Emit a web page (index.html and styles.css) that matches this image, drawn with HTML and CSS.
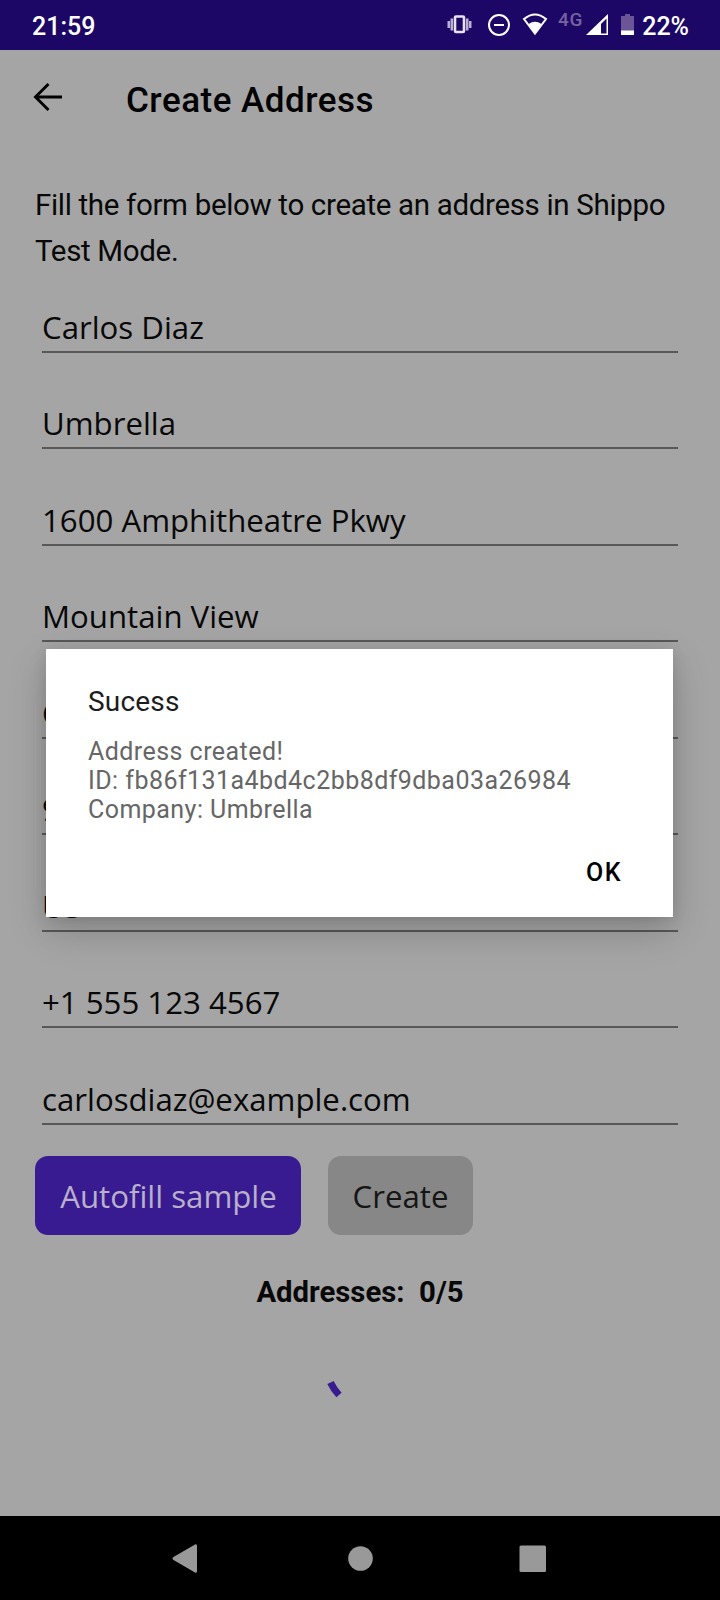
FILE: index.html
```html
<!DOCTYPE html>
<html lang="en">
<head>
<meta charset="utf-8">
<title>Create Address</title>
<link rel="stylesheet" href="styles.css">
</head>
<body>
<div class="screen">
  <header class="status">
    <span class="clock">21:59</span>
    <svg class="status-icons" width="194" height="50" viewBox="0 0 194 50" fill="none">
      <g fill="#b9b0d3"><rect x="2.500" y="21" width="2.500" height="7"/><rect x="5.500" y="18.500" width="2.500" height="12"/><rect x="21" y="18.500" width="2.500" height="12"/><rect x="24" y="21" width="2.500" height="7"/></g>
      <rect x="10" y="16.500" width="9" height="15.500" rx="1" stroke="#e6e2f0" stroke-width="2.600"/>
      <circle cx="54" cy="25" r="10" stroke="#fff" stroke-width="2"/>
      <path d="M49 25h10" stroke="#fff" stroke-width="2"/>
      <path d="M79 19Q90 10 101 19L90 33.500Z" stroke="#fff" stroke-width="2"/>
      <path d="M83.500 24Q90 19.500 96.500 24L90 33.500Z" fill="#fff"/>
      <path d="M141 35L163 14V35Z" fill="#fff"/><path d="M156 24L161.500 18.500V33.500H156Z" fill="#1d0766"/>
      <path d="M176 16h4v-2h5v2h4v19h-13Z" fill="#6a5697"/><path d="M176 30.500h13V35h-13Z" fill="#fff"/>
    </svg>
    <span class="network">4G</span>
    <span class="battery">22%</span>
  </header>
  <div class="appbar">
    <svg width="30" height="30" viewBox="0 0 30 30" fill="none" stroke="#000" stroke-width="2.900"><path d="M29 15H3M15.500 2L2.500 15L15.500 28"/></svg>
    <h1 class="title">Create Address</h1>
  </div>
  <main class="content">
    <p class="intro">Fill the form below to create an address in Shippo<br>Test Mode.</p>
    <div class="fields">
      <div class="field"><span>Carlos Diaz</span></div>
      <div class="field"><span>Umbrella</span></div>
      <div class="field"><span>1600 Amphitheatre Pkwy</span></div>
      <div class="field"><span>Mountain View</span></div>
      <div class="field"><span>CA</span></div>
      <div class="field"><span>94043</span></div>
      <div class="field"><span>US</span></div>
      <div class="field"><span>+1 555 123 4567</span></div>
      <div class="field"><span>carlosdiaz@example.com</span></div>
    </div>
    <div class="actions">
      <button class="btn primary">Autofill sample</button>
      <button class="btn secondary">Create</button>
    </div>
    <p class="count">Addresses:&nbsp; 0/5</p>
    <svg class="spinner" width="60" height="60" viewBox="0 0 60 60" fill="none"><path d="M3.500 14.500Q6.500 21 12 27" stroke="#381b91" stroke-width="7"/></svg>
  </main>
  <nav class="nav">
    <svg width="720" height="84" viewBox="0 0 720 84" fill="#999"><path d="M173.500 41L195 28.500Q197 27.500 197 30V55Q197 57.500 195 56.500L173.500 44Q171.500 42.500 173.500 41Z"/><circle cx="360.500" cy="42.500" r="12.300"/><rect x="519.500" y="29.500" width="26.500" height="26.500" rx="1.500"/></svg>
  </nav>
  <section class="dialog" role="dialog">
    <h2 class="dialog-title">Sucess</h2>
    <p class="dialog-text">Address created!<br>ID: fb86f131a4bd4c2bb8df9dba03a26984<br>Company: Umbrella</p>
    <button class="ok">OK</button>
  </section>
</div>
</body>
</html>
```
FILE: styles.css
```css
* { box-sizing: border-box; margin: 0; padding: 0; }
body { width: 720px; height: 1600px; overflow: hidden; font-family: Roboto, sans-serif; color: #080808; }
button { border: 0; font: inherit; }
.screen { position: relative; width: 720px; height: 1600px; display: flex; flex-direction: column; background: #a5a5a5; }
.status { position: relative; flex: none; height: 50px; padding: 3px 31px 0 32px; display: flex; align-items: center; justify-content: space-between; background: #1d0766; color: #fff; font-size: 25px; font-weight: 500; }
.status-icons { position: absolute; left: 445px; top: 0; }
.network { position: absolute; left: 558px; top: 9px; font-size: 19px; line-height: 22px; letter-spacing: 0.7px; color: #7462a0; }
.appbar { flex: none; height: 100px; padding-left: 33px; display: flex; align-items: center; }
.appbar svg { margin-top: -6px; }
.title { margin-left: 63px; font-size: 35px; font-weight: 500; letter-spacing: 0.5px; color: #000; }
.content { flex: 1; display: flex; flex-direction: column; padding: 32px 42px 0; }
.intro { margin-left: -7px; font-size: 29.5px; line-height: 46px; letter-spacing: -0.33px; white-space: nowrap; }
.fields { margin-top: -18px; }
.field { height: 96.500px; display: flex; align-items: flex-end; padding-bottom: 1px; border-bottom: 2px solid #585858; font-family: "Open Sans", sans-serif; font-size: 31.200px; line-height: 46px; white-space: nowrap; }
.actions { display: flex; gap: 27px; margin: 31px 0 0 -7px; }
.btn { height: 79px; padding-top: 2px; border-radius: 13px; font-family: "Open Sans", sans-serif; font-size: 31.200px; white-space: nowrap; }
.primary { width: 266px; padding-left: 1px; background: #381b91; color: #b9b0c9; }
.secondary { width: 145px; background: #878787; color: #151515; }
.count { margin-top: 39px; text-align: center; font-size: 29.300px; line-height: 36px; font-weight: 700; }
.spinner { margin: 58px 0 0 285px; }
.nav { flex: none; height: 84px; background: #000; }
.nav svg { display: block; }
.dialog { position: absolute; left: 46px; top: 649px; width: 627px; height: 268px; padding: 35px 42px 0; background: #fff; box-shadow: 0 14px 36px rgba(0,0,0,.2), 0 2px 14px rgba(0,0,0,.1); display: flex; flex-direction: column; }
.dialog-title { font-size: 28px; line-height: 36px; font-weight: 400; letter-spacing: 0.2px; color: #1c1c1c; }
.dialog-text { margin-top: 17px; font-size: 25px; line-height: 29px; letter-spacing: 0.45px; color: #666; white-space: nowrap; }
.ok { align-self: flex-end; margin: 31px 9px 0 0; background: none; font-size: 25px; line-height: 36px; font-weight: 500; letter-spacing: 1.500px; color: #000; }
```
